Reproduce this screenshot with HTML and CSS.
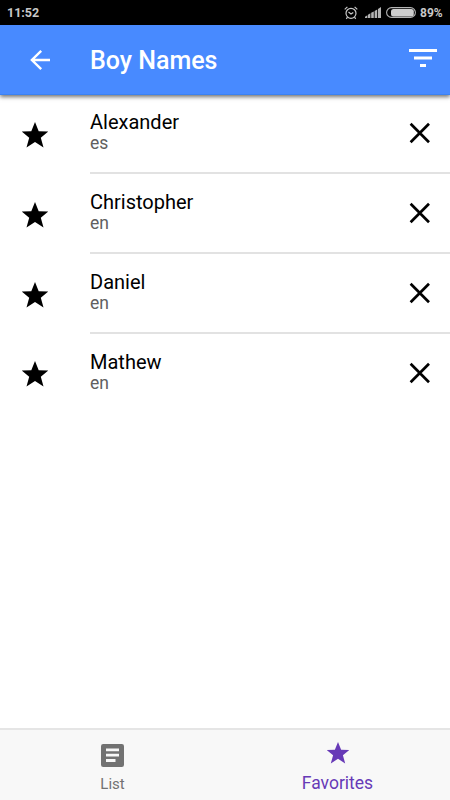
FILE: index.html
```html
<!DOCTYPE html>
<html lang="en">
<head>
<meta charset="utf-8">
<title>Boy Names</title>
<link rel="stylesheet" href="styles.css">
</head>
<body>
<svg class="defs" aria-hidden="true">
  <symbol id="star" viewBox="0 0 26 26"><path d="M13 0l3.7 9.3 9.6.2-7.5 6.2 2.7 9.8L13 19.9l-8.5 5.6 2.7-9.8L-.3 9.5l9.6-.2z"/></symbol>
  <symbol id="close" viewBox="0 0 22 22"><path d="M1.6 1.8l18.4 18.4M20 1.8L1.6 20.2" stroke="#000" stroke-width="2.7" stroke-linecap="butt"/></symbol>
</svg>
<div class="status">
  <span class="clock">11:52</span>
  <svg class="alarm" viewBox="0 0 14 14" fill="none" stroke="#c8c8c8" stroke-width="1.2"><circle cx="7" cy="7.3" r="5"/><path d="M4.5 6l2.5 2 2.3-1.6M.7 3.4L3.4.9M13.3 3.4L10.6.9M3.5 11.2l-1.2 1.6M10.5 11.2l1.2 1.6"/></svg>
  <svg class="signal" viewBox="0 0 16 11" fill="#b4b4b4"><path d="M0 11V9.8L2.4 8.2V11zM3 11V7.8L5.4 6.2V11zM6.2 11V5.8L8.8 4.4V11zM9.6 11V4L12.2 2.4V11zM13 11V2L16 0V11z"/></svg>
  <svg class="battery" viewBox="0 0 30 11"><rect x=".6" y=".6" width="28.8" height="9.8" rx="4.9" fill="none" stroke="#b4b4b4" stroke-width="1.1"/><rect x="5" y="2" width="22.8" height="7.4" rx="2.5" fill="#cecece"/></svg>
  <span class="percent">89%</span>
</div>
<header class="toolbar">
  <svg class="back" viewBox="0 0 20 20" fill="none" stroke="#fff" stroke-width="2.4"><path d="M20 10H1.8M11.2.9L1.9 10l9.3 9.1"/></svg>
  <h1>Boy Names</h1>
  <svg class="filter" viewBox="0 0 28 19" fill="#fff"><path d="M0 0h28v3H0zM5 7.5h18v3H5zM11 15h6v3h-6z"/></svg>
</header>
<main class="list">
  <div class="row"><svg class="star"><use href="#star"/></svg><div class="body"><div class="text"><h2>Alexander</h2><p>es</p></div><svg class="close"><use href="#close"/></svg></div></div>
  <div class="row"><svg class="star"><use href="#star"/></svg><div class="body"><div class="text"><h2>Christopher</h2><p>en</p></div><svg class="close"><use href="#close"/></svg></div></div>
  <div class="row"><svg class="star"><use href="#star"/></svg><div class="body"><div class="text"><h2>Daniel</h2><p>en</p></div><svg class="close"><use href="#close"/></svg></div></div>
  <div class="row last"><svg class="star"><use href="#star"/></svg><div class="body"><div class="text"><h2>Mathew</h2><p>en</p></div><svg class="close"><use href="#close"/></svg></div></div>
</main>
<nav class="tabs">
  <div class="tab">
    <svg class="doc" viewBox="0 0 23 23"><rect width="23" height="23" rx="2.2" fill="#727272"/><path d="M5 4.4h13v2.9H5zM5 9.7h13v2.9H5zM5 15h9.5v2.9H5z" fill="#f8f8f8"/></svg>
    <span>List</span>
  </div>
  <div class="tab active">
    <svg class="fav"><use href="#star"/></svg>
    <span>Favorites</span>
  </div>
</nav>
</body>
</html>
```
FILE: styles.css
```css
* { box-sizing: border-box; }
body {
  margin: 0;
  height: 800px;
  display: flex;
  flex-direction: column;
  overflow: hidden;
  background: #fff;
  color: #000;
  font-family: Roboto, sans-serif;
}
svg { display: block; flex: none; overflow: visible; }
h1, h2, p { margin: 0; }
.defs { position: absolute; width: 0; height: 0; }

.status {
  height: 25px;
  flex: none;
  display: flex;
  align-items: center;
  padding: 0 8px 0 7px;
  background: #000;
  color: #c8c8c8;
  font-size: 12.5px;
  font-weight: 700;
  line-height: 25px;
}
.clock { flex: 1; }
.alarm { width: 14px; height: 14px; margin-right: 7px; }
.signal { width: 16px; height: 11px; margin-right: 5px; }
.battery { width: 30px; height: 11px; margin-right: 4px; }
.percent { width: 22px; font-size: 12px; line-height: 23px; padding-top: 2px; white-space: nowrap; }

.toolbar {
  height: 70px;
  flex: none;
  display: flex;
  align-items: center;
  padding: 0 13px 0 30px;
  background: #488aff;
  border-bottom: 1px solid #3b82f2;
  color: #fff;
  box-shadow: 0 2px 4px rgba(0, 0, 0, .55);
  z-index: 1;
}
.back { width: 20px; height: 20px; margin-right: 40px; }
.toolbar h1 { flex: 1; font-size: 25px; font-weight: 500; line-height: 30px; padding-top: 2px; }
.filter { width: 28px; height: 19px; margin-bottom: 2px; }

.list { flex: 1; }
.row { height: 80px; display: flex; padding-left: 22px; }
.star { width: 26px; height: 26px; margin: 27px 42px 0 0; }
.last .star { margin-top: 26px; }
.body {
  flex: 1;
  height: 79px;
  display: flex;
  justify-content: space-between;
  padding: 15px 19px 0 0;
  border-bottom: 2px solid #e2e2e2;
}
.last .body { border-bottom: 0; }
.text h2 { font-size: 20px; font-weight: 400; line-height: 24px; }
.text p { color: #606060; font-size: 17.5px; line-height: 18px; }
.close { width: 22px; height: 22px; margin-top: 12px; }

.tabs {
  height: 72px;
  flex: none;
  display: flex;
  background: #f8f8f8;
  border-top: 2px solid #e5e5e5;
}
.tab {
  flex: 1;
  display: flex;
  flex-direction: column;
  align-items: center;
  color: #727272;
  font-size: 15px;
  line-height: 20px;
}
.doc { width: 23px; height: 23px; margin: 14px 0 7px; }
.active { color: #673ab7; font-size: 17.5px; }
.fav { width: 22px; height: 22px; margin: 12px 0 9px; fill: #673ab7; }
```
